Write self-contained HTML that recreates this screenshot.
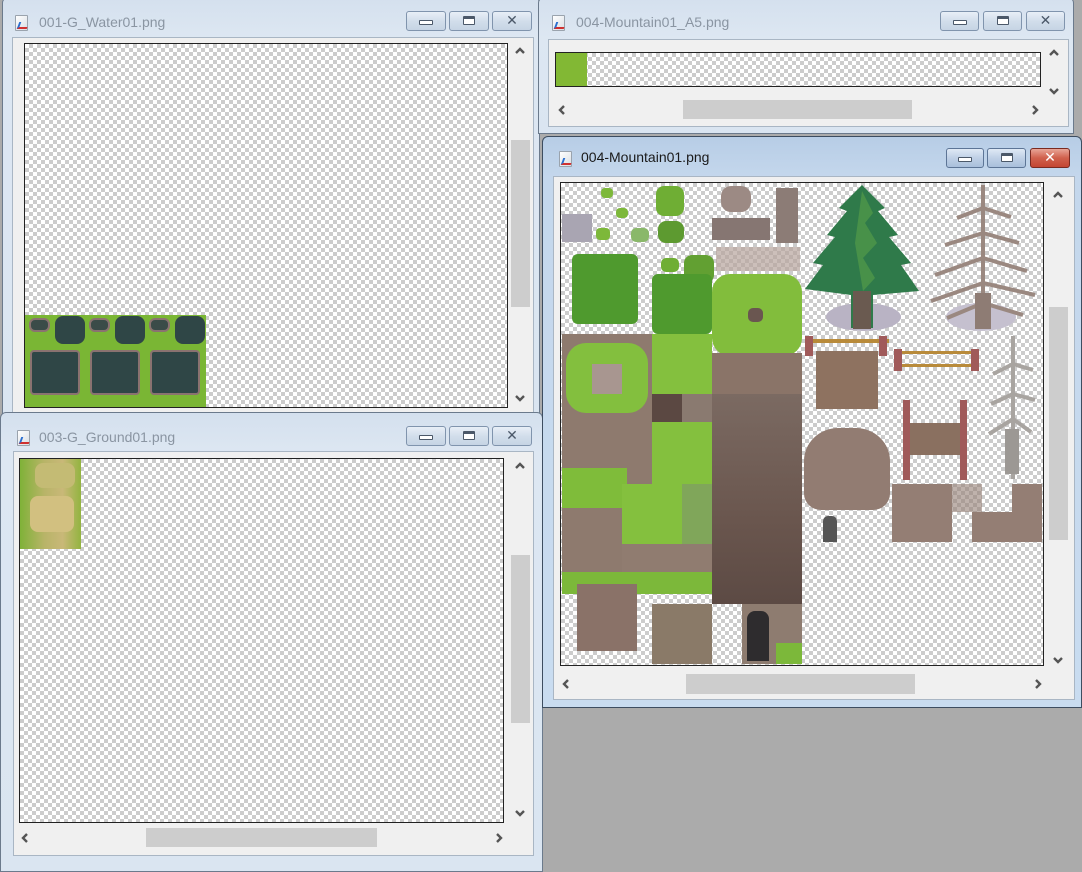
<!DOCTYPE html>
<html><head><meta charset="utf-8"><style>
*{margin:0;padding:0;box-sizing:border-box}
body{width:1082px;height:862px;background:#ababab;position:relative;overflow:hidden;font-family:"Segoe UI","Liberation Sans",sans-serif}
.a{position:absolute}
.win{position:absolute;border:1px solid #6b7a8c;border-radius:6px 6px 0 0;background:linear-gradient(#d4e0ee,#dde7f2 40px,#dae5f1)}
.act{background:linear-gradient(#b7cde6,#c4d7ec 40px,#c9dcf0);border-color:#3d4d60}
.cl{position:absolute;background:#f0f0f0;border:1px solid #a9b6c4}
.chk{position:absolute;border:1px solid #222;background-color:#fff;background-image:conic-gradient(#ccc 25%,#fff 0 50%,#ccc 0 75%,#fff 0);background-size:8px 8px}
.t{position:absolute;font-size:14px;color:#8a95a2;white-space:nowrap}
.act .t{color:#1a1a1a}
.btn{position:absolute;height:20px;border:1px solid #8094ad;border-radius:3px;background:linear-gradient(#e8eff7,#d2deeb 50%,#c6d4e4)}
.act .btn{background:linear-gradient(#dfe9f5,#bfd0e6 50%,#a9bfdb);border-color:#5d7596}
.btn.x.red{background:linear-gradient(#e8a597,#d0604c 50%,#c44532);border-color:#7a2a20}
.btn i{position:absolute;left:50%;top:50%}
.mi i{width:14px;height:5px;margin:-1px 0 0 -7px;border:1px solid #4b5869;background:#fff;border-radius:1px}
.re i{width:12px;height:9px;margin:-5px 0 0 -6px;border:1px solid #4b5869;background:#fff;border-top-width:3px;border-radius:1px}
.x span{position:absolute;left:0;right:0;top:0;text-align:center;font:bold 14px/18px "DejaVu Sans",sans-serif;color:#4b5869}
.red span{color:#fff}
.ico{position:absolute;width:13px;height:16px;background:linear-gradient(135deg,#fff,#d8dde3);border:1px solid #9aa3ad;border-radius:1px}
.ico:after{content:"";position:absolute;left:2px;top:6px;width:8px;height:5px;border-left:2px solid #2a6fd0;border-bottom:2px solid #d03030;transform:skewX(-20deg)}
.th{position:absolute;background:#cdcdcd}
.ar{position:absolute;width:10px;height:10px}
.ar polyline{fill:none;stroke:#555;stroke-width:2.4}
.dk{position:absolute}
</style></head><body>
<svg width="0" height="0" style="position:absolute"><defs>
<symbol id="up" viewBox="0 0 10 10"><polyline points="1,7 5,3 9,7" fill="none" stroke="#555" stroke-width="2.4"/></symbol>
<symbol id="dn" viewBox="0 0 10 10"><polyline points="1,3 5,7 9,3" fill="none" stroke="#555" stroke-width="2.4"/></symbol>
<symbol id="lf" viewBox="0 0 10 10"><polyline points="7,1 3,5 7,9" fill="none" stroke="#555" stroke-width="2.4"/></symbol>
<symbol id="rt" viewBox="0 0 10 10"><polyline points="3,1 7,5 3,9" fill="none" stroke="#555" stroke-width="2.4"/></symbol>
</defs></svg>

<!-- Window 1 -->
<div class="win" style="left:2px;top:-3px;width:538px;height:420px">
 <div class="ico" style="left:12px;top:17px"></div>
 <div class="t" style="left:36px;top:16px">001-G_Water01.png</div>
 <div class="btn mi" style="left:403px;top:13px;width:40px"><i></i></div>
 <div class="btn re" style="left:446px;top:13px;width:40px"><i></i></div>
 <div class="btn x" style="left:489px;top:13px;width:40px"><span>✕</span></div>
</div>
<div class="cl" style="left:12px;top:37px;width:522px;height:380px"></div>
<div class="chk" style="left:24px;top:43px;width:484px;height:365px"></div>
<div class="a" style="left:25px;top:315px;width:181px;height:92px;background:#7ab634"></div>
<div class="a" style="left:29px;top:318px;width:21px;height:14px;background:#3a4b48;border-radius:6px;border:2px solid #8a7270"></div>
<div class="a" style="left:55px;top:316px;width:30px;height:28px;background:#2f4646;border-radius:8px"></div>
<div class="a" style="left:89px;top:318px;width:21px;height:14px;background:#3a4b48;border-radius:6px;border:2px solid #8a7270"></div>
<div class="a" style="left:115px;top:316px;width:30px;height:28px;background:#2f4646;border-radius:8px"></div>
<div class="a" style="left:149px;top:318px;width:21px;height:14px;background:#3a4b48;border-radius:6px;border:2px solid #8a7270"></div>
<div class="a" style="left:175px;top:316px;width:30px;height:28px;background:#2f4646;border-radius:8px"></div>
<div class="a" style="left:30px;top:350px;width:50px;height:45px;background:#2f4646;border:2px solid #8a7270;border-radius:4px"></div>
<div class="a" style="left:90px;top:350px;width:50px;height:45px;background:#2f4646;border:2px solid #8a7270;border-radius:4px"></div>
<div class="a" style="left:150px;top:350px;width:50px;height:45px;background:#2f4646;border:2px solid #8a7270;border-radius:4px"></div>
<div class="th" style="left:511px;top:140px;width:19px;height:167px"></div>
<svg class="ar" style="left:515px;top:46px"><use href="#up"/></svg>
<svg class="ar" style="left:515px;top:393px"><use href="#dn"/></svg>

<!-- Window 2 -->
<div class="win" style="left:538px;top:-3px;width:536px;height:137px">
 <div class="ico" style="left:13px;top:17px"></div>
 <div class="t" style="left:37px;top:16px">004-Mountain01_A5.png</div>
 <div class="btn mi" style="left:401px;top:13px;width:39px"><i></i></div>
 <div class="btn re" style="left:444px;top:13px;width:39px"><i></i></div>
 <div class="btn x" style="left:487px;top:13px;width:39px"><span>✕</span></div>
</div>
<div class="cl" style="left:548px;top:39px;width:521px;height:88px"></div>
<div class="chk" style="left:555px;top:52px;width:486px;height:35px"></div>
<div class="a" style="left:556px;top:53px;width:31px;height:33px;background:#82b834"></div>
<div class="th" style="left:683px;top:100px;width:229px;height:19px"></div>
<svg class="ar" style="left:1049px;top:48px"><use href="#up"/></svg>
<svg class="ar" style="left:1049px;top:86px"><use href="#dn"/></svg>
<svg class="ar" style="left:557px;top:105px"><use href="#lf"/></svg>
<svg class="ar" style="left:1030px;top:105px"><use href="#rt"/></svg>

<!-- Window 3 -->
<div class="win" style="left:0px;top:412px;width:543px;height:460px">
 <div class="ico" style="left:16px;top:17px"></div>
 <div class="t" style="left:38px;top:16px">003-G_Ground01.png</div>
 <div class="btn mi" style="left:405px;top:13px;width:40px"><i></i></div>
 <div class="btn re" style="left:448px;top:13px;width:40px"><i></i></div>
 <div class="btn x" style="left:491px;top:13px;width:40px"><span>✕</span></div>
</div>
<div class="cl" style="left:13px;top:451px;width:521px;height:405px"></div>
<div class="chk" style="left:19px;top:458px;width:485px;height:365px"></div>
<div class="a" style="left:20px;top:459px;width:61px;height:90px;background:linear-gradient(90deg,#7fb238 0,#b8b468 40%,#c9b878 70%,#93b440)"></div>
<div class="a" style="left:30px;top:496px;width:44px;height:36px;background:#d2c080;border-radius:8px"></div>
<div class="a" style="left:35px;top:463px;width:40px;height:25px;background:#c4bb74;border-radius:8px"></div>
<div class="th" style="left:511px;top:555px;width:19px;height:168px"></div>
<div class="th" style="left:146px;top:828px;width:231px;height:19px"></div>
<svg class="ar" style="left:515px;top:461px"><use href="#up"/></svg>
<svg class="ar" style="left:515px;top:808px"><use href="#dn"/></svg>
<svg class="ar" style="left:20px;top:833px"><use href="#lf"/></svg>
<svg class="ar" style="left:494px;top:833px"><use href="#rt"/></svg>

<!-- Window 4 (active) -->
<div class="win act" style="left:542px;top:136px;width:540px;height:572px">
 <div class="ico" style="left:16px;top:14px"></div>
 <div class="t" style="left:38px;top:12px">004-Mountain01.png</div>
 <div class="btn mi" style="left:403px;top:11px;width:38px"><i></i></div>
 <div class="btn re" style="left:444px;top:11px;width:39px"><i></i></div>
 <div class="btn x red" style="left:487px;top:11px;width:40px"><span>✕</span></div>
</div>
<div class="cl" style="left:553px;top:176px;width:522px;height:524px"></div>
<div class="chk" style="left:560px;top:182px;width:484px;height:484px"></div>
<div class="th" style="left:1049px;top:307px;width:19px;height:233px"></div>
<div class="th" style="left:686px;top:674px;width:229px;height:20px"></div>
<svg class="ar" style="left:1053px;top:190px"><use href="#up"/></svg>
<svg class="ar" style="left:1053px;top:655px"><use href="#dn"/></svg>
<svg class="ar" style="left:561px;top:679px"><use href="#lf"/></svg>
<svg class="ar" style="left:1033px;top:679px"><use href="#rt"/></svg>

<div class="a" style="left:561px;top:183px">
 <div class="dk" style="left:1px;top:31px;width:30px;height:28px;background:#a9a5b2"></div>
 <div class="dk" style="left:40px;top:5px;width:12px;height:10px;background:#7db83a;border-radius:4px"></div>
 <div class="dk" style="left:55px;top:25px;width:12px;height:10px;background:#7db83a;border-radius:4px"></div>
 <div class="dk" style="left:35px;top:45px;width:14px;height:12px;background:#7db83a;border-radius:4px"></div>
 <div class="dk" style="left:95px;top:3px;width:28px;height:30px;background:#6fae34;border-radius:8px"></div>
 <div class="dk" style="left:97px;top:38px;width:26px;height:22px;background:#5d9a30;border-radius:8px"></div>
 <div class="dk" style="left:70px;top:45px;width:18px;height:14px;background:#8ab86a;border-radius:5px"></div>
 <div class="dk" style="left:123px;top:72px;width:30px;height:28px;background:#62a032;border-radius:8px"></div>
 <div class="dk" style="left:100px;top:75px;width:18px;height:14px;background:#6fae34;border-radius:5px"></div>
 <div class="dk" style="left:160px;top:3px;width:30px;height:26px;background:#9c8a84;border-radius:10px"></div>
 <div class="dk" style="left:151px;top:35px;width:58px;height:22px;background:#867672"></div>
 <div class="dk" style="left:215px;top:5px;width:22px;height:55px;background:#8c7c76"></div>
 <div class="dk" style="left:155px;top:64px;width:84px;height:24px;background:#b7a49c;opacity:.7"></div>
 <div class="dk" style="left:11px;top:71px;width:66px;height:70px;background:#4f9a2e;border-radius:6px"></div>
 <div class="dk" style="left:91px;top:91px;width:60px;height:60px;background:#4f9a2e;border-radius:6px"></div>
 <div class="dk" style="left:151px;top:91px;width:90px;height:82px;background:#82bd3c;border-radius:18px"></div>
 <div class="dk" style="left:187px;top:125px;width:15px;height:14px;background:#6a5650;border-radius:5px"></div>
 <div class="dk" style="left:151px;top:170px;width:90px;height:42px;background:#8a7468"></div>
 <div class="dk" style="left:151px;top:211px;width:90px;height:210px;background:linear-gradient(#7b6a62,#6a564e 60%,#5c4a44)"></div>
 <div class="dk" style="left:1px;top:151px;width:91px;height:240px;background:#8e7a6e"></div>
 <div class="dk" style="left:5px;top:160px;width:82px;height:70px;background:#83bf3e;border-radius:20px"></div>
 <div class="dk" style="left:31px;top:181px;width:30px;height:30px;background:#a89690"></div>
 <div class="dk" style="left:1px;top:285px;width:65px;height:40px;background:#7fbc3a"></div>
 <div class="dk" style="left:91px;top:151px;width:60px;height:60px;background:#84c03e"></div>
 <div class="dk" style="left:91px;top:211px;width:30px;height:28px;background:#5b4842"></div>
 <div class="dk" style="left:121px;top:211px;width:30px;height:28px;background:#8a7a70"></div>
 <div class="dk" style="left:91px;top:239px;width:60px;height:122px;background:#84c03e"></div>
 <div class="dk" style="left:61px;top:301px;width:30px;height:60px;background:#84c03e"></div>
 <div class="dk" style="left:121px;top:301px;width:30px;height:60px;background:#80a65a"></div>
 <div class="dk" style="left:61px;top:361px;width:90px;height:30px;background:#907c70"></div>
 <div class="dk" style="left:1px;top:389px;width:150px;height:22px;background:#7cb83a"></div>
 <div class="dk" style="left:16px;top:401px;width:60px;height:67px;background:#8a7268"></div>
 <div class="dk" style="left:91px;top:421px;width:60px;height:60px;background:#8a7a68"></div>
 <div class="dk" style="left:181px;top:421px;width:60px;height:60px;background:#8e7c70"></div>
 <div class="dk" style="left:186px;top:428px;width:22px;height:50px;background:#2e2c2e;border-radius:8px 8px 0 0"></div>
 <div class="dk" style="left:215px;top:460px;width:26px;height:21px;background:#7cb83a"></div>
 <div class="dk" style="left:265px;top:120px;width:75px;height:28px;background:#b9b3c4;border-radius:50%"></div>
 <svg class="dk" style="left:242px;top:0" width="118" height="150"><polygon points="59,2 82,25 75,28 95,52 86,54 108,80 98,82 116,108 70,112 70,145 48,145 48,112 2,106 20,82 10,80 32,54 24,52 44,28 36,25" fill="#2f7a4a"/><polygon points="59,8 70,30 62,40 74,60 60,75 72,95 60,108 52,60" fill="#5aa04a" opacity=".6"/><rect x="50" y="108" width="18" height="38" fill="#6a5a50"/></svg>
 <div class="dk" style="left:385px;top:120px;width:70px;height:28px;background:#c5c0cf;border-radius:50%"></div>
 <svg class="dk" style="left:366px;top:0" width="112" height="150" stroke="#9a8880" stroke-width="4" fill="none"><line x1="56" y1="2" x2="56" y2="145"/><path d="M56 25 L30 35 M56 25 L84 34 M56 50 L18 62 M56 50 L92 60 M56 75 L8 92 M56 75 L100 88 M56 100 L4 118 M56 100 L108 112 M56 120 L20 135 M56 120 L96 132"/><rect x="48" y="110" width="16" height="36" fill="#8e7c74" stroke="none"/></svg>
 <div class="dk" style="left:255px;top:168px;width:62px;height:58px;background:#8e7260"></div>
 <div class="dk" style="left:244px;top:156px;width:84px;height:4px;background:#b88a3a"></div>
 <div class="dk" style="left:244px;top:153px;width:8px;height:20px;background:#a05a5a"></div>
 <div class="dk" style="left:318px;top:153px;width:8px;height:20px;background:#a05a5a"></div>
 <div class="dk" style="left:334px;top:168px;width:84px;height:3px;background:#b88a3a"></div>
 <div class="dk" style="left:334px;top:181px;width:84px;height:3px;background:#b88a3a"></div>
 <div class="dk" style="left:333px;top:166px;width:8px;height:22px;background:#a05a5a"></div>
 <div class="dk" style="left:410px;top:166px;width:8px;height:22px;background:#a05a5a"></div>
 <div class="dk" style="left:344px;top:240px;width:62px;height:32px;background:#8a7060"></div>
 <div class="dk" style="left:342px;top:217px;width:7px;height:80px;background:#a05a5a"></div>
 <div class="dk" style="left:399px;top:217px;width:7px;height:80px;background:#a05a5a"></div>
 <svg class="dk" style="left:426px;top:151px" width="52" height="150" stroke="#a8a4a0" stroke-width="4" fill="none"><line x1="26" y1="2" x2="26" y2="145"/><path d="M26 30 L6 40 M26 30 L46 36 M26 60 L4 70 M26 60 L48 66 M26 85 L2 100 M26 85 L44 98"/><rect x="18" y="95" width="14" height="45" fill="#9c9894" stroke="none"/></svg>
 <div class="dk" style="left:243px;top:245px;width:86px;height:82px;background:#927c72;border-radius:40% 40% 20% 20%"></div>
 <div class="dk" style="left:331px;top:301px;width:60px;height:58px;background:#947e74"></div>
 <div class="dk" style="left:391px;top:301px;width:30px;height:28px;background:#947e74;opacity:.6"></div>
 <div class="dk" style="left:451px;top:301px;width:30px;height:58px;background:#947e74"></div>
 <div class="dk" style="left:411px;top:329px;width:40px;height:30px;background:#947e74"></div>
 <div class="dk" style="left:262px;top:333px;width:14px;height:26px;background:#555;border-radius:5px 5px 0 0"></div>
</div>
</body></html>
